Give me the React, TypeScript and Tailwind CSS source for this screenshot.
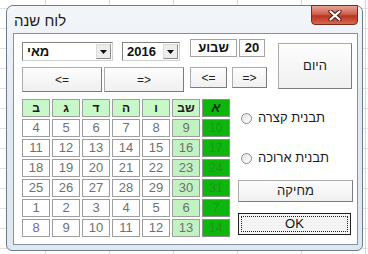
const HEAD = ['ב', 'ג', 'ד', 'ה', 'ו', 'שב', 'א']
const ROWS = [
  [4, 5, 6, 7, 8, 9, 10],
  [11, 12, 13, 14, 15, 16, 17],
  [18, 19, 20, 21, 22, 23, 24],
  [25, 26, 27, 28, 29, 30, 31],
  [1, 2, 3, 4, 5, 6, 7],
  [8, 9, 10, 11, 12, 13, 14],
]

const FONT = { fontFamily: '"Liberation Sans", "DejaVu Sans", sans-serif' }

function Btn({ label, className }: { label: string; className: string }) {
  return (
    <div
      className={
        'flex items-center justify-center border border-[#acacac] border-r-[#7c7c7c] border-b-[#7c7c7c] bg-[linear-gradient(#fdfdfd,#f0f0f0)] text-[12px] text-[#1e1e1e] ' +
        className
      }
    >
      {label}
    </div>
  )
}

function Combo({ value, className }: { value: string; className: string }) {
  return (
    <div className={'flex h-[19px] border border-[#828282] border-r-[#d0d0d0] border-b-[#d0d0d0] bg-white ' + className}>
      <div className="flex-1 pl-[4px] text-[13px] font-bold leading-[17px] text-[#111]">{value}</div>
      <div className="m-[1px] flex w-[15px] items-center justify-center border border-[#dcdcdc] border-r-[#8a8a8a] border-b-[#8a8a8a] bg-[#ececec]">
        <svg width="7" height="4" viewBox="0 0 7 4">
          <path d="M0 0h7L3.5 4z" fill="#111" />
        </svg>
      </div>
    </div>
  )
}

function Radio({ label }: { label: string }) {
  return (
    <div className="flex h-[16px] items-center gap-[6px] pl-[3px]">
      <div className="h-[11px] w-[11px] rounded-full border border-[#8c8c8c] bg-[linear-gradient(135deg,#e2e2e2,#ffffff)]" />
      <span className="text-[13px] text-[#1a1a1a]">{label}</span>
    </div>
  )
}

export default function App() {
  return (
    <div
      style={FONT}
      className="h-[254px] w-[368px] overflow-hidden bg-white bg-[linear-gradient(90deg,#d8d8d8_1px,transparent_1px),linear-gradient(#e2e2e2_1px,transparent_1px)] bg-size-[64px_20px] bg-position-[45px_8px] pl-[6px] pt-[5px]"
    >
      {/* window */}
      <div className="flex h-[246px] w-[357px] flex-col rounded-t-[7px] rounded-b-[6px] border border-[#6d7b8a] bg-[linear-gradient(180deg,#f3f6f9,#e4eaf1_40%,#dfe7ef)] pb-[5px] pl-[6px] pr-[4px]">
        {/* title bar */}
        <div className="flex h-[27px] items-start justify-between">
          <div className="pl-[1px] pt-[6px] text-[15px] leading-[18px] text-[#1b1b1b]">לוח שנה</div>
          <div className="-mt-[1px] flex h-[20px] w-[47px] items-center justify-center rounded-b-[4px] border border-[#7a2a20] bg-[linear-gradient(#e7a597,#d1604c_45%,#b83422_55%,#d36a4f)]">
            <svg width="14" height="11" viewBox="0 0 14 11">
              <path d="M2.5 1.5l9 8M11.5 1.5l-9 8" stroke="#5a1a12" strokeWidth="4.2" strokeLinecap="round" />
              <path d="M2.5 1.5l9 8M11.5 1.5l-9 8" stroke="#ffffff" strokeWidth="2.2" strokeLinecap="round" />
            </svg>
          </div>
        </div>

        {/* client */}
        <div className="flex h-[212px] w-[345px] flex-col border border-[#8592a0] bg-white">
          {/* top controls */}
          <div className="flex items-start pl-[8px] pt-[5px]">
            <div className="mt-[3px] flex w-[162px] flex-col gap-[6px]">
              <div className="flex gap-[9px]">
                <Combo value="מאי" className="w-[91px]" />
                <Combo value="2016" className="w-[58px]" />
              </div>
              <div className="flex gap-[2px]">
                <Btn label="<=" className="h-[25px] w-[80px]" />
                <Btn label="=>" className="h-[25px] w-[80px]" />
              </div>
            </div>

            <div className="ml-[6px] flex w-[77px] flex-col gap-[10px]">
              <div className="flex gap-[2px]">
                <div className="flex h-[18px] w-[47px] items-center justify-center border border-[#a3a3a3] bg-white text-[13px] font-bold text-[#111]">
                  שבוע
                </div>
                <div className="flex h-[18px] w-[26px] items-center justify-center border border-[#a3a3a3] bg-white text-[13px] font-bold text-[#111]">
                  20
                </div>
              </div>
              <div className="flex gap-[5px]">
                <Btn label="<=" className="h-[21px] w-[37px]" />
                <Btn label="=>" className="h-[21px] w-[35px]" />
              </div>
            </div>

            <Btn label="היום" className="ml-[11px] mt-[4px] h-[46px] w-[74px] text-[13px]" />
          </div>

          {/* calendar + side panel */}
          <div className="mt-[7px] flex pl-[8px]">
            <div className="grid grid-cols-[repeat(7,28px)] grid-rows-[repeat(7,18px)] gap-[2px]">
              {HEAD.map((h, i) => (
                <div
                  key={h}
                  className={
                    i === 6
                      ? 'flex items-center justify-center border border-[#8e8e8e] bg-[#0db60d] text-[13px] font-bold italic text-[#0d2b0d]'
                      : 'flex items-center justify-center border border-[#9e9e9e] bg-[#c8f7c8] text-[12px] font-bold text-[#1b1b1b]'
                  }
                >
                  {h}
                </div>
              ))}
              {ROWS.flatMap((row, r) =>
                row.map((d, i) => (
                  <div
                    key={r + '-' + i}
                    className={
                      i === 6
                        ? 'flex items-center justify-center border border-[#8e8e8e] bg-[#0db60d] text-[12px] text-[#2b8d1f]'
                        : i === 5
                          ? 'flex items-center justify-center border border-[#9e9e9e] bg-[#c2f2c2] text-[13px] text-[#707070]'
                          : 'flex items-center justify-center border border-[#9e9e9e] bg-white text-[13px] text-[#707070]'
                    }
                  >
                    {d}
                  </div>
                ))
              )}
            </div>

            <div className="ml-[8px] flex w-[115px] flex-col">
              <div className="mt-[11px]">
                <Radio label="תבנית קצרה" />
              </div>
              <div className="mt-[24px]">
                <Radio label="תבנית ארוכה" />
              </div>
              <Btn label="מחיקה" className="mt-[14px] h-[22px] w-[115px] text-[13px]" />
              <div className="mt-[11px] h-[22px] w-[113px] border border-[#1f1f1f] bg-[#f4f4f4] p-[2px]">
                <div className="flex h-full items-center justify-center border border-dotted border-[#222] text-[13px] text-[#111]">
                  OK
                </div>
              </div>
            </div>
          </div>
        </div>
      </div>
    </div>
  )
}
